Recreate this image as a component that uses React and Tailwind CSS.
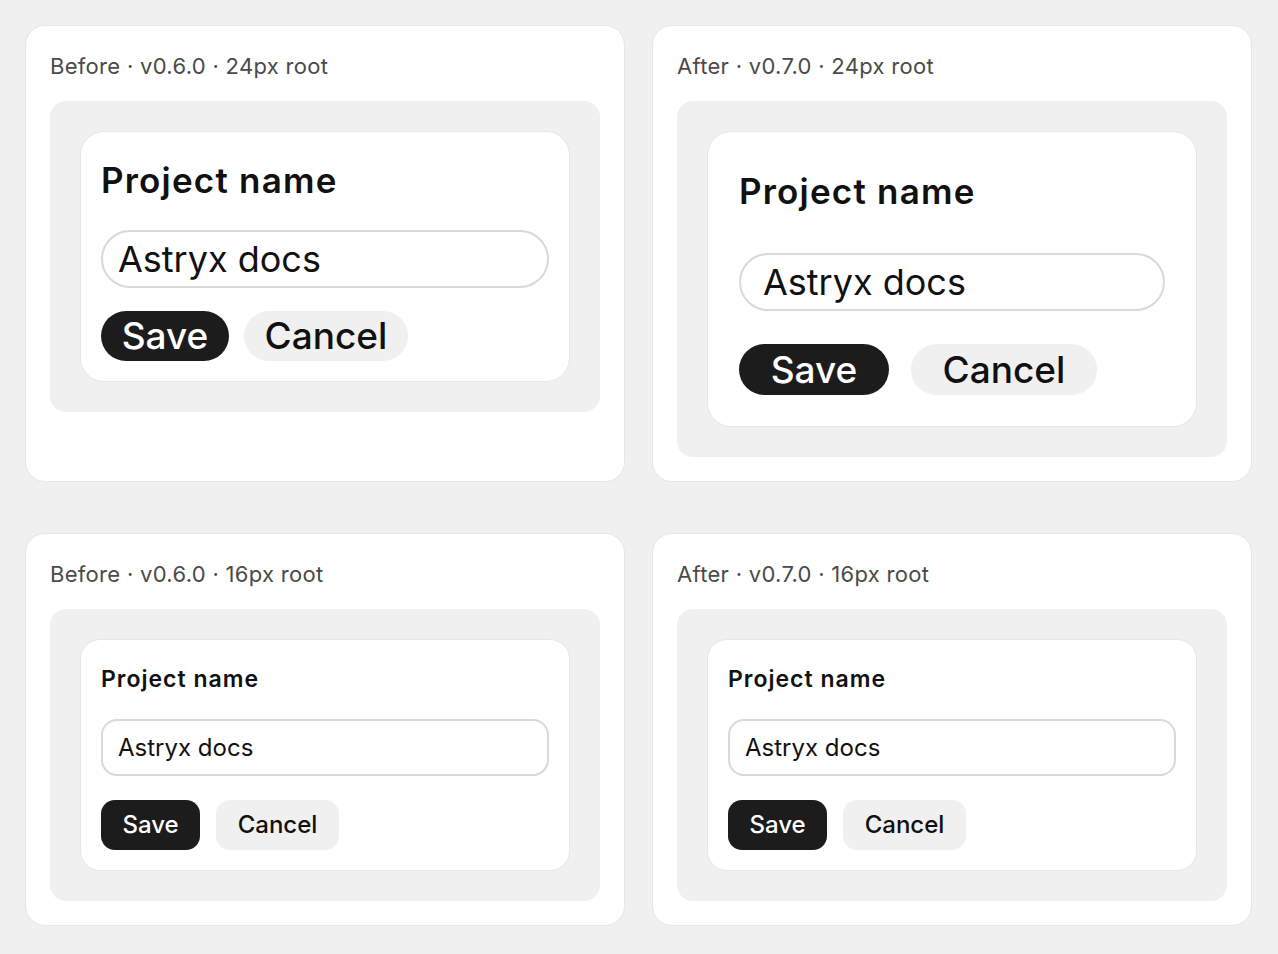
const font = { fontFamily: 'Inter, "Noto Sans", sans-serif' }

function Label({ children }) {
  return (
    <div className="h-[28px] leading-[28px] text-[22px] tracking-[0.3px] text-[#4a4a4a] mb-[21px]">{children}</div>
  )
}

function BeforeLarge() {
  return (
    <div className="rounded-[24px] border border-[#e6e6e6] bg-white p-[20px]">
      <div className="h-[52px] flex items-center pt-[4px] text-[35px] font-semibold tracking-[1.2px] text-[#111]">Project name</div>
      <div className="mt-[26px] h-[58px] rounded-full border-2 border-[#d9d9d9] flex items-center pl-[15px] text-[36px] text-[#111]">
        Astryx docs
      </div>
      <div className="mt-[23px] flex gap-[15px]">
        <button className="w-[128px] h-[50px] rounded-full bg-[#1c1c1c] text-white text-[37px] font-medium flex items-center justify-center">Save</button>
        <button className="w-[164px] h-[50px] rounded-full bg-[#f0f0f0] text-[#111] text-[37px] font-medium flex items-center justify-center">Cancel</button>
      </div>
    </div>
  )
}

function AfterLarge() {
  return (
    <div className="rounded-[24px] border border-[#e6e6e6] bg-white p-[31px]">
      <div className="h-[56px] flex items-center text-[35px] font-semibold tracking-[1.2px] text-[#111]">Project name</div>
      <div className="mt-[34px] h-[58px] rounded-full border-2 border-[#d9d9d9] flex items-center pl-[22px] text-[36px] text-[#111]">
        Astryx docs
      </div>
      <div className="mt-[33px] flex gap-[22px]">
        <button className="w-[150px] h-[51px] rounded-full bg-[#1c1c1c] text-white text-[37px] font-medium flex items-center justify-center">Save</button>
        <button className="w-[186px] h-[51px] rounded-full bg-[#f0f0f0] text-[#111] text-[37px] font-medium flex items-center justify-center">Cancel</button>
      </div>
    </div>
  )
}

function SmallForm() {
  return (
    <div className="rounded-[20px] border border-[#e6e6e6] bg-white p-[20px]">
      <div className="h-[36px] flex items-center pt-[2px] text-[23px] font-semibold tracking-[1px] text-[#111]">Project name</div>
      <div className="mt-[23px] h-[57px] rounded-[16px] border-2 border-[#d9d9d9] flex items-center pl-[15px] text-[24px] text-[#111]">
        Astryx docs
      </div>
      <div className="mt-[24px] flex gap-[16px]">
        <button className="w-[99px] h-[50px] rounded-[14px] bg-[#1c1c1c] text-white text-[24px] font-medium flex items-center justify-center">Save</button>
        <button className="w-[123px] h-[50px] rounded-[14px] bg-[#f0f0f0] text-[#111] text-[24px] font-medium flex items-center justify-center">Cancel</button>
      </div>
    </div>
  )
}

function Panel({ label, children }) {
  return (
    <div className="rounded-[20px] border border-[#e6e6e6] bg-white px-[24px] pt-[26px] pb-[24px]">
      <Label>{label}</Label>
      <div className="rounded-[16px] bg-[#f0f0f0] p-[30px]">{children}</div>
    </div>
  )
}

export default function App() {
  return (
    <div className="min-h-screen bg-[#f0f0f0] p-[25px]" style={font}>
      <div className="grid grid-cols-[600px_600px] gap-x-[27px] gap-y-[51px]">
        <Panel label="Before · v0.6.0 · 24px root"><BeforeLarge /></Panel>
        <Panel label="After · v0.7.0 · 24px root"><AfterLarge /></Panel>
        <Panel label="Before · v0.6.0 · 16px root"><SmallForm /></Panel>
        <Panel label="After · v0.7.0 · 16px root"><SmallForm /></Panel>
      </div>
    </div>
  )
}
